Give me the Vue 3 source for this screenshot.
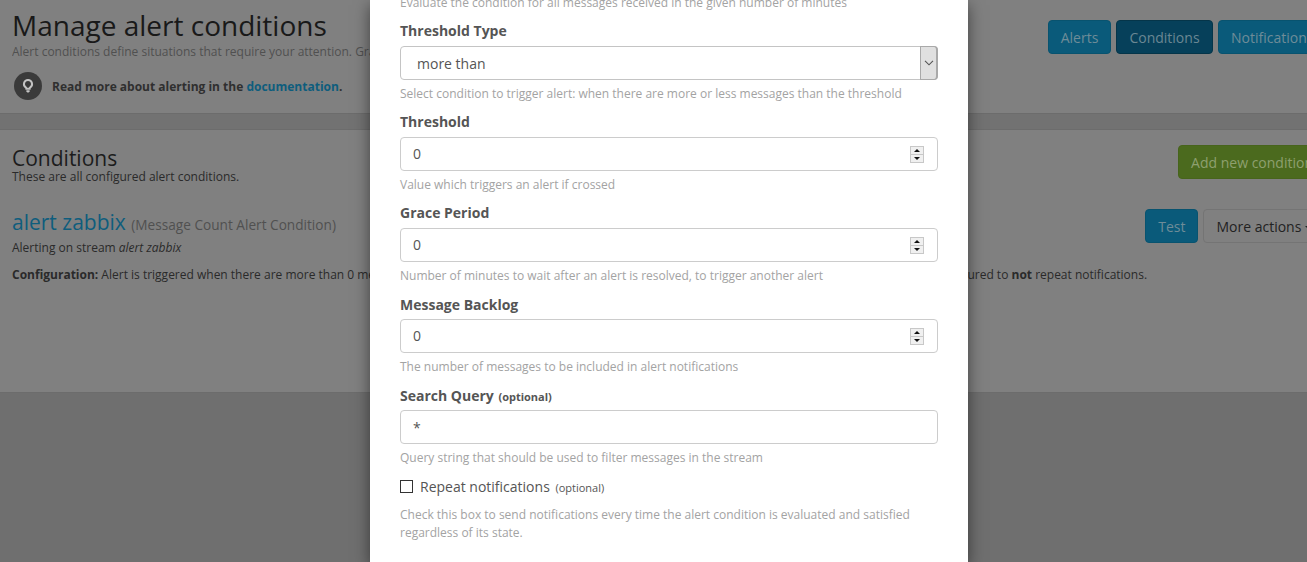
<script setup>
const fields = [
  { label: 'Threshold', value: '0', help: 'Value which triggers an alert if crossed', lift: true },
  { label: 'Grace Period', value: '0', help: 'Number of minutes to wait after an alert is resolved, to trigger another alert', lift: true },
  { label: 'Message Backlog', value: '0', help: 'The number of messages to be included in alert notifications', lift: false },
]
</script>

<template>
  <div class="page">
    <header class="head">
      <div class="head-main">
        <h1>Manage alert conditions</h1>
        <p class="lead">Alert conditions define situations that require your attention. Graylog will check those conditions periodically and notify you when their statuses change.</p>
        <div class="doc">
          <span class="bulb">
            <svg width="12" height="16" viewBox="0 0 12 16"><path d="M6 2a4 4 0 0 0-2.300 7.300c.5.4.7.9.7 1.500h3.200c0-.6.2-1.100.7-1.500A4 4 0 0 0 6 2z" fill="none" stroke="#c4c4c4" stroke-width="2"/><path d="M4.400 12.200h3.200v1.300l-1 1h-1.200l-1-1z" fill="#c4c4c4"/></svg>
          </span>
          <strong>Read more about alerting in the <a>documentation</a>.</strong>
        </div>
      </div>
      <nav class="tabs">
        <button class="btn info tab-alerts">Alerts</button>
        <button class="btn info active tab-conditions">Conditions</button>
        <button class="btn info">Notifications</button>
      </nav>
    </header>

    <div class="band"></div>

    <section class="panel">
      <div class="panel-head">
        <div>
          <h2>Conditions</h2>
          <p class="sub">These are all configured alert conditions.</p>
        </div>
        <button class="btn success">Add new condition</button>
      </div>
      <div class="cond">
        <div class="cond-text">
          <h3><a>alert zabbix</a> <small>(Message Count Alert Condition)</small></h3>
          <p class="stream">Alerting on stream <em>alert zabbix</em></p>
        </div>
        <div class="cond-actions">
          <button class="btn info">Test</button>
          <button class="btn plain">More actions <i class="caret"></i></button>
        </div>
      </div>
      <p class="config"><strong>Configuration:</strong> Alert is triggered when there are more than 0 messages in the last 5 minutes. Grace period: 0 minutes. Not including messages, in alert notifications. Configured to <strong>not</strong> repeat notifications.</p>
    </section>

    <div class="shade"></div>

    <div class="modal">
      <p class="help first">Evaluate the condition for all messages received in the given number of minutes</p>

      <div class="field">
        <label class="lift">Threshold Type</label>
        <div class="control select">
          <span>more than</span>
          <span class="select-btn">
            <svg width="10" height="6" viewBox="0 0 10 6"><path d="M1 .8l4 4 4-4" fill="none" stroke="#555" stroke-width="1.100"/></svg>
          </span>
        </div>
        <p class="help">Select condition to trigger alert: when there are more or less messages than the threshold</p>
      </div>

      <div v-for="f in fields" :key="f.label" class="field">
        <label :class="{ lift: f.lift }">{{ f.label }}</label>
        <div class="control num">
          <span>{{ f.value }}</span>
          <span class="spin">
            <svg width="14" height="17" viewBox="0 0 14 17">
              <rect width="14" height="17" fill="#c8c8c8"/>
              <rect x="1" y="1" width="12" height="7" fill="#f0f0f0"/>
              <rect x="1" y="9" width="12" height="7" fill="#f0f0f0"/>
              <path d="M7 3l3 3h-6z" fill="#111"/>
              <path d="M7 14l3-3h-6z" fill="#111"/>
            </svg>
          </span>
        </div>
        <p class="help">{{ f.help }}</p>
      </div>

      <div class="field">
        <label>Search Query <small>(optional)</small></label>
        <div class="control"><span>*</span></div>
        <p class="help">Query string that should be used to filter messages in the stream</p>
      </div>

      <div class="check">
        <span class="box"></span>
        <span class="check-label">Repeat notifications <small>(optional)</small></span>
      </div>
      <p class="help check-help">Check this box to send notifications every time the alert condition is evaluated and satisfied regardless of its state.</p>
    </div>
  </div>
</template>

<style>
html, body { margin: 0; background: #808080; overflow: hidden; }
</style>

<style scoped>
.page {
  position: relative;
  width: 1307px;
  height: 562px;
  overflow: hidden;
  background: #808080;
  font-family: "Open Sans", "Noto Sans", sans-serif;
  font-size: 12px;
  color: #1f1f1f;
  display: flex;
  flex-direction: column;
}
h1, h2, h3, p { margin: 0; font-weight: 400; }
.head {
  height: 113px;
  box-sizing: border-box;
  flex: none;
  padding: 9px 0 0 12px;
  display: flex;
  position: relative;
  overflow: hidden;
}
.head-main { flex: none; width: 1036px; }
h1 { font-size: 28px; line-height: 32px; color: #191919; margin-bottom: 3px; }
.lead { line-height: 16px; color: #505050; white-space: nowrap; overflow: hidden; }
.doc {
  margin: 12px 0 0 2px;
  display: flex;
  align-items: center;
  gap: 10px;
  font-size: 12px;
  color: #2f2f2f;
}
.bulb {
  width: 28px;
  height: 28px;
  border-radius: 50%;
  background: #3a3a3a;
  display: flex;
  align-items: center;
  justify-content: center;
}
a { color: #0e5d7d; }
.tabs { display: flex; gap: 5px; padding-top: 11px; flex: none; align-items: flex-start; }
.btn {
  height: 34px;
  box-sizing: border-box;
  padding: 0 12px;
  border-radius: 4px;
  font: 14px "Open Sans", "Noto Sans", sans-serif;
  border: 1px solid transparent;
  white-space: nowrap;
  flex: none;
}
.tab-alerts { width: 63px; padding: 0; }
.tab-conditions { width: 97px; padding: 0; }
.info { background: #0a5a7a; color: #6e8c98; border-color: #08536f; }
.active { background: #06405a; border-color: #053549; color: #6a8793; }
.success { background: #4b6a1e; color: #8ea06f; border-color: #47641c; }
.plain { background: #808080; color: #222; border-color: #747474; }
.caret {
  display: inline-block;
  vertical-align: middle;
  border-top: 4px solid #222;
  border-left: 4px solid transparent;
  border-right: 4px solid transparent;
}
.band {
  height: 15px;
  flex: none;
  background: #727272;
  border-top: 1px solid #6c6c6c;
  border-bottom: 1px solid #6c6c6c;
}
.panel {
  height: 263px;
  flex: none;
  box-sizing: border-box;
  padding: 17px 0 0 12px;
  background: #808080;
  border-bottom: 1px solid #6c6c6c;
  overflow: hidden;
}
.panel-head {
  display: flex;
  justify-content: space-between;
  height: 39px;
  width: 1330px;
}
h2 { font-size: 21px; line-height: 22px; color: #1c1c1c; }
.sub { line-height: 14px; margin-top: 1px; color: #2a2a2a; }
.panel-head .btn { margin-top: -2px; margin-right: 16px; }
.cond {
  margin-top: 23px;
  display: flex;
  justify-content: space-between;
  width: 1330px;
}
h3 { font-size: 21px; line-height: 26px; }
h3 a { color: #0e5d7d; }
h3 small { font-size: 13.65px; color: #505050; }
.stream { line-height: 16px; margin-top: 2px; color: #2a2a2a; }
.cond-actions { display: flex; gap: 5px; height: 34px; margin-right: 16px; }
.config {
  margin-top: 10px;
  line-height: 18px;
  color: #2a2a2a;
  white-space: nowrap;
  width: 1295px;
  overflow: hidden;
}
.shade { flex: 1; background: #6f6f6f; }

.modal {
  position: absolute;
  left: 370px;
  top: 0;
  width: 598px;
  height: 562px;
  box-sizing: border-box;
  padding: 0 30px;
  background: #fff;
  box-shadow: 0 5px 15px rgba(0, 0, 0, 0.5);
  color: #555;
}
.help { font-size: 12px; line-height: 17px; color: #a3a3a3; }
.first { margin-top: -6px; white-space: nowrap; }
.field { margin-top: 11px; }
.field label {
  display: block;
  height: 20px;
  font-size: 14px;
  font-weight: 700;
  line-height: 20px;
  color: #555;
}
.field label.lift { line-height: 18px; }
label small { font-size: 11px; line-height: 1; margin-left: 1px; }
.control {
  position: relative;
  height: 34px;
  margin-top: 4px;
  box-sizing: border-box;
  padding: 0 12px;
  display: flex;
  align-items: center;
  border: 1px solid #ccc;
  border-radius: 4px;
  font-size: 14px;
  color: #555;
}
.num { padding-bottom: 2px; }
.field .help { margin-top: 5px; }
.select { padding-left: 16px; border-color: #c4c4c4; }
.select-btn {
  position: absolute;
  right: -1px;
  top: -1px;
  bottom: -1px;
  width: 18px;
  box-sizing: border-box;
  background: #e0e0e0;
  border: 1px solid #a9a9a9;
  border-right-width: 2px;
  border-radius: 0 4px 4px 0;
  display: flex;
  align-items: center;
  justify-content: center;
}
.spin { position: absolute; right: 13px; top: 8px; line-height: 0; }
.check { display: flex; align-items: center; gap: 7px; margin-top: 10px; height: 20px; }
.box { width: 11px; height: 11px; border: 1px solid #333; background: #fff; flex: none; }
.check-label { font-size: 14px; color: #555; line-height: 20px; padding-top: 2px; }
.check-label small { font-size: 11px; line-height: 1; margin-left: 2px; }
.check-help { margin-top: 10px; line-height: 18px; }
</style>
